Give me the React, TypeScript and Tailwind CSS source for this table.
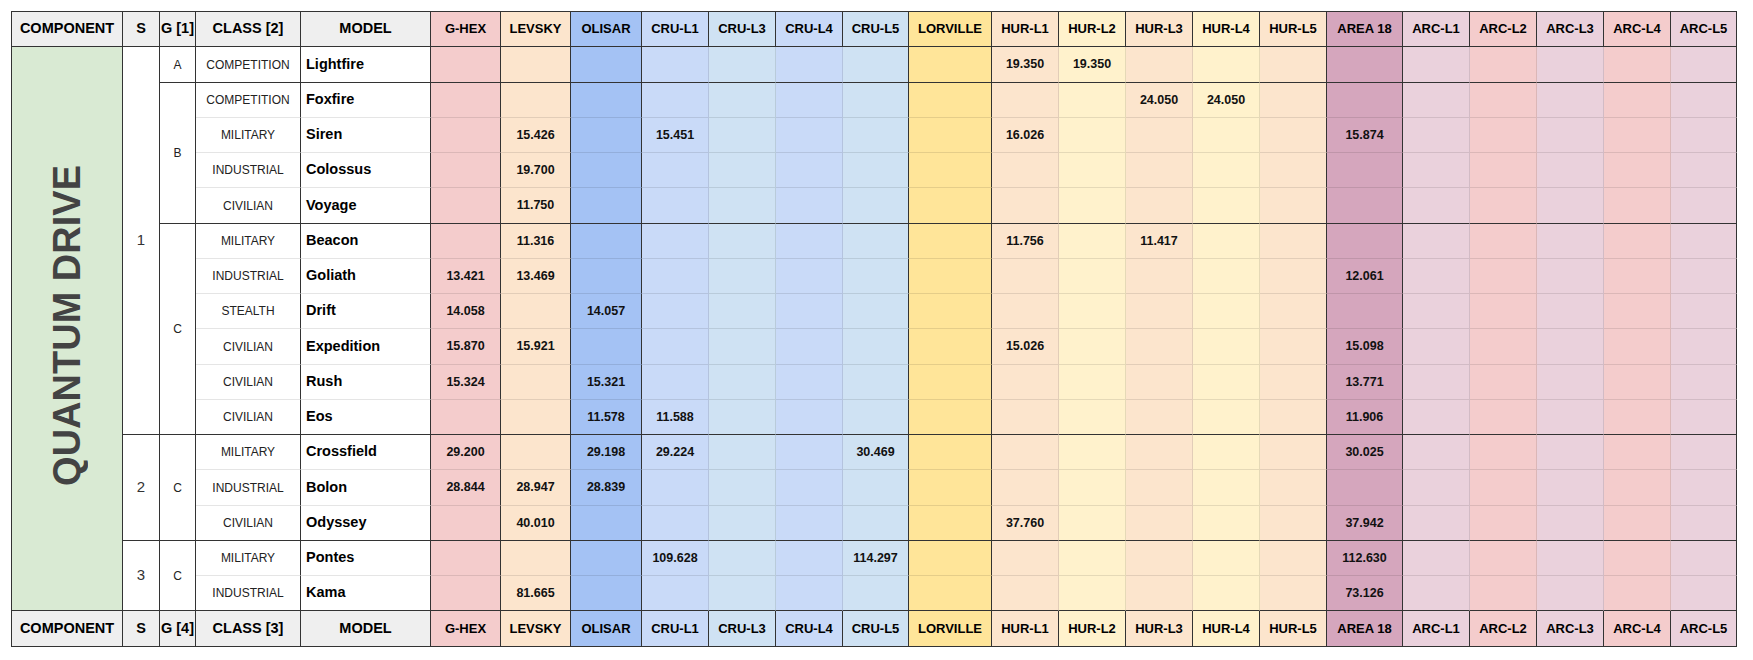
import React from "react";

const DARK_R = "border-r border-r-[#333333]";
const LIGHT_R = "border-r border-r-[rgba(0,0,0,0.1)]";
const DARK_B = "border-b border-b-[#333333]";
const LIGHT_B = "border-b border-b-[rgba(0,0,0,0.1)]";

type Loc = { name: string; w: number; bg: string; r: string };

const LOCS: Loc[] = [
  { name: "G-HEX", w: 70, bg: "bg-[#f4cccc]", r: DARK_R },
  { name: "LEVSKY", w: 70, bg: "bg-[#fce5cd]", r: DARK_R },
  { name: "OLISAR", w: 71, bg: "bg-[#a4c2f4]", r: DARK_R },
  { name: "CRU-L1", w: 67, bg: "bg-[#c9daf8]", r: LIGHT_R },
  { name: "CRU-L3", w: 67, bg: "bg-[#cfe2f3]", r: LIGHT_R },
  { name: "CRU-L4", w: 67, bg: "bg-[#c9daf8]", r: LIGHT_R },
  { name: "CRU-L5", w: 66, bg: "bg-[#cfe2f3]", r: DARK_R },
  { name: "LORVILLE", w: 83, bg: "bg-[#ffe599]", r: DARK_R },
  { name: "HUR-L1", w: 67, bg: "bg-[#fce5cd]", r: LIGHT_R },
  { name: "HUR-L2", w: 67, bg: "bg-[#fff2cc]", r: LIGHT_R },
  { name: "HUR-L3", w: 67, bg: "bg-[#fce5cd]", r: LIGHT_R },
  { name: "HUR-L4", w: 67, bg: "bg-[#fff2cc]", r: LIGHT_R },
  { name: "HUR-L5", w: 67, bg: "bg-[#fce5cd]", r: DARK_R },
  { name: "AREA 18", w: 76, bg: "bg-[#d5a6bd]", r: DARK_R },
  { name: "ARC-L1", w: 67, bg: "bg-[#ead1dc]", r: LIGHT_R },
  { name: "ARC-L2", w: 67, bg: "bg-[#f4cccc]", r: LIGHT_R },
  { name: "ARC-L3", w: 67, bg: "bg-[#ead1dc]", r: LIGHT_R },
  { name: "ARC-L4", w: 67, bg: "bg-[#f4cccc]", r: LIGHT_R },
  { name: "ARC-L5", w: 66, bg: "bg-[#ead1dc]", r: DARK_R },
];

type Row = { model: string; cls: string; vals: Record<number, string> };

const ROWS: Row[] = [
  { model: "Lightfire", cls: "COMPETITION", vals: { 8: "19.350", 9: "19.350" } },
  { model: "Foxfire", cls: "COMPETITION", vals: { 10: "24.050", 11: "24.050" } },
  { model: "Siren", cls: "MILITARY", vals: { 1: "15.426", 3: "15.451", 8: "16.026", 13: "15.874" } },
  { model: "Colossus", cls: "INDUSTRIAL", vals: { 1: "19.700" } },
  { model: "Voyage", cls: "CIVILIAN", vals: { 1: "11.750" } },
  { model: "Beacon", cls: "MILITARY", vals: { 1: "11.316", 8: "11.756", 10: "11.417" } },
  { model: "Goliath", cls: "INDUSTRIAL", vals: { 0: "13.421", 1: "13.469", 13: "12.061" } },
  { model: "Drift", cls: "STEALTH", vals: { 0: "14.058", 2: "14.057" } },
  { model: "Expedition", cls: "CIVILIAN", vals: { 0: "15.870", 1: "15.921", 8: "15.026", 13: "15.098" } },
  { model: "Rush", cls: "CIVILIAN", vals: { 0: "15.324", 2: "15.321", 13: "13.771" } },
  { model: "Eos", cls: "CIVILIAN", vals: { 2: "11.578", 3: "11.588", 13: "11.906" } },
  { model: "Crossfield", cls: "MILITARY", vals: { 0: "29.200", 2: "29.198", 3: "29.224", 6: "30.469", 13: "30.025" } },
  { model: "Bolon", cls: "INDUSTRIAL", vals: { 0: "28.844", 1: "28.947", 2: "28.839" } },
  { model: "Odyssey", cls: "CIVILIAN", vals: { 1: "40.010", 8: "37.760", 13: "37.942" } },
  { model: "Pontes", cls: "MILITARY", vals: { 3: "109.628", 6: "114.297", 13: "112.630" } },
  { model: "Kama", cls: "INDUSTRIAL", vals: { 1: "81.665", 13: "73.126" } },
];

const DARK_AFTER = new Set([0, 4, 10, 13, 15]);

const S_GROUPS: Record<number, [string, number]> = { 0: ["1", 11], 11: ["2", 3], 14: ["3", 2] };
const G_GROUPS: Record<number, [string, number]> = {
  0: ["A", 1],
  1: ["B", 4],
  5: ["C", 6],
  11: ["C", 3],
  14: ["C", 2],
};

const LEFT_COLS = [111, 37, 36, 105, 130];

function HeaderRow({ g, cls, last }: { g: string; cls: string; last?: boolean }) {
  const base = `h-[35px] p-0 text-center align-middle whitespace-nowrap font-bold text-black ${DARK_R} ${DARK_B}`;
  const left = `${base} bg-[#efefef] text-[14.5px]`;
  return (
    <tr className={last ? "h-[36px]" : "h-[35px]"}>
      <td className={left}>COMPONENT</td>
      <td className={left}>S</td>
      <td className={left}>{g}</td>
      <td className={left}>{cls}</td>
      <td className={left}>MODEL</td>
      {LOCS.map((l) => (
        <td key={l.name} className={`h-[35px] p-0 text-center align-middle whitespace-nowrap font-bold text-black text-[13px] ${l.bg} ${DARK_R} ${DARK_B}`}>
          {l.name}
        </td>
      ))}
    </tr>
  );
}

export default function App() {
  return (
    <div className="bg-white w-[1753px] h-[660px] pl-[11px] pt-[11px] font-['Liberation_Sans',Arial,sans-serif]">
      <table className="table-fixed border-separate border-spacing-0 border-t border-l border-[#333333] w-[1726px]">
        <colgroup>
          {LEFT_COLS.map((w, i) => (
            <col key={i} style={{ width: w }} />
          ))}
          {LOCS.map((l) => (
            <col key={l.name} style={{ width: l.w }} />
          ))}
        </colgroup>
        <tbody>
          <HeaderRow g="G [1]" cls="CLASS [2]" />
          {ROWS.map((row, i) => {
            const bottom = DARK_AFTER.has(i) ? DARK_B : LIGHT_B;
            const h = i % 4 === 0 ? "h-[36px]" : "h-[35px]";
            const s = S_GROUPS[i];
            const g = G_GROUPS[i];
            return (
              <tr key={row.model} className={h}>
                {i === 0 && (
                  <td rowSpan={16} className={`p-0 bg-[#d9ead3] text-center align-middle ${DARK_R} ${DARK_B}`}>
                    <div className="inline-block [writing-mode:vertical-rl] rotate-180 text-[38px] leading-none font-bold text-[#434343] whitespace-nowrap">
                      QUANTUM DRIVE
                    </div>
                  </td>
                )}
                {s && (
                  <td rowSpan={s[1]} className={`p-0 bg-white text-center align-middle text-[15px] text-[#333333] ${DARK_R} ${DARK_B}`}>
                    {s[0]}
                  </td>
                )}
                {g && (
                  <td rowSpan={g[1]} className={`p-0 bg-white text-center align-middle text-[12px] text-[#222222] ${DARK_R} ${DARK_B}`}>
                    {g[0]}
                  </td>
                )}
                <td className={`p-0 bg-white text-center align-middle whitespace-nowrap text-[12px] text-[#222222] ${DARK_R} ${bottom}`}>
                  {row.cls}
                </td>
                <td className={`p-0 pl-[5px] bg-white text-left align-middle whitespace-nowrap text-[14.5px] font-bold text-black ${DARK_R} ${bottom}`}>
                  {row.model}
                </td>
                {LOCS.map((l, j) => (
                  <td key={l.name} className={`p-0 text-center align-middle whitespace-nowrap text-[12.5px] font-bold text-[#111111] ${l.bg} ${l.r} ${bottom}`}>
                    {row.vals[j] ?? ""}
                  </td>
                ))}
              </tr>
            );
          })}
          <HeaderRow g="G [4]" cls="CLASS [3]" last />
        </tbody>
      </table>
    </div>
  );
}
